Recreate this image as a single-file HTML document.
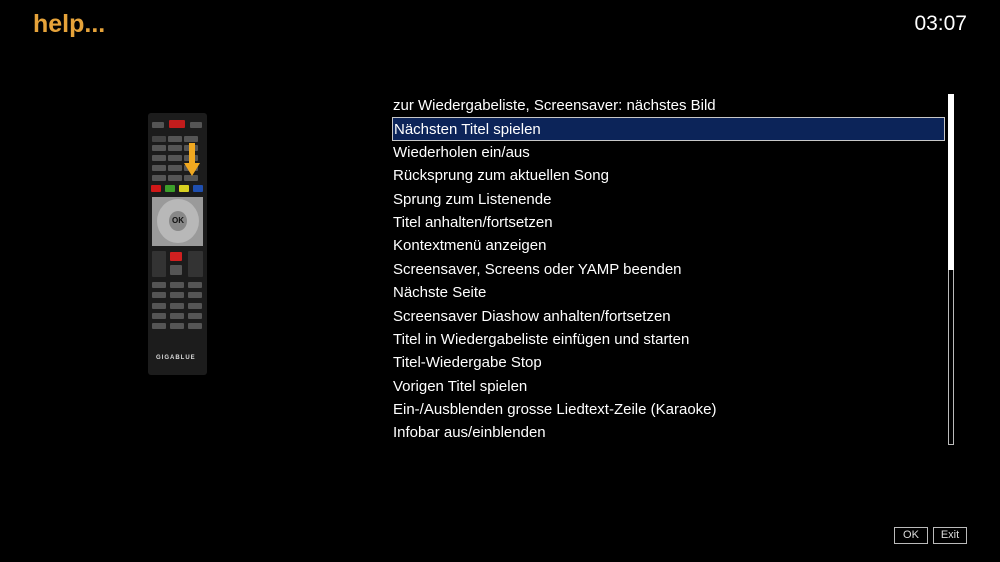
<!DOCTYPE html>
<html><head><meta charset="utf-8"><style>
body{margin:0;width:1000px;height:562px;background:#000;overflow:hidden;font-family:"Liberation Sans",sans-serif;position:relative;color:#fff}
.t{position:absolute;left:33px;top:10px;font-size:25px;font-weight:bold;color:#e6a33a}
.c{position:absolute;right:33px;top:12px;font-size:21px}
.l{position:absolute;left:392px;top:94px;width:553px}
.r{height:23.4px;line-height:23px;font-size:15px;padding-left:1px;box-sizing:border-box;white-space:nowrap}
.s{background:#0c2459;border:1px solid #c8c8c8}
.sb{position:absolute;left:948px;top:94px;width:4px;height:349px;border:1px solid #bbb}
.sf{position:absolute;left:948px;top:94px;width:6px;height:176px;background:#fff}
.b{position:absolute;top:527px;height:15px;border:1px solid #bbb;font-size:11px;line-height:15px;text-align:center;color:#ddd}
.rm{position:absolute;left:148px;top:113px;width:59px;height:262px;background:#1c1c1c;border-radius:3px}
.k{position:absolute;background:#555;height:6px;width:14px;border-radius:1px}
</style></head><body>
<div class="t">help...</div><div class="c">03:07</div>
<div class="rm">
<div class="k" style="left:4px;top:9px;width:12px"></div><div class="k" style="left:21px;top:7px;width:16px;height:8px;background:#c21c1c"></div><div class="k" style="left:42px;top:9px;width:12px"></div>
<div class="k" style="left:4px;top:23px;background:#444"></div><div class="k" style="left:20px;top:23px"></div><div class="k" style="left:36px;top:23px"></div>
<div class="k" style="left:4px;top:32px"></div><div class="k" style="left:20px;top:32px"></div><div class="k" style="left:36px;top:32px"></div>
<div class="k" style="left:4px;top:42px"></div><div class="k" style="left:20px;top:42px"></div><div class="k" style="left:36px;top:42px"></div>
<div class="k" style="left:4px;top:52px"></div><div class="k" style="left:20px;top:52px"></div><div class="k" style="left:36px;top:52px"></div>
<div class="k" style="left:4px;top:62px"></div><div class="k" style="left:20px;top:62px"></div><div class="k" style="left:36px;top:62px"></div>
<div class="k" style="left:3px;top:72px;width:10px;height:7px;background:#d01818"></div><div class="k" style="left:17px;top:72px;width:10px;height:7px;background:#3ca02a"></div><div class="k" style="left:31px;top:72px;width:10px;height:7px;background:#d8d020"></div><div class="k" style="left:45px;top:72px;width:10px;height:7px;background:#1f4fb0"></div>
<div style="position:absolute;left:4px;top:84px;width:51px;height:49px;background:#9a9a9a"></div>
<div style="position:absolute;left:9px;top:86px;width:42px;height:44px;border-radius:50%;background:#b8b8b8"></div>
<div style="position:absolute;left:21px;top:98px;width:18px;height:20px;border-radius:50%;background:#888;font-size:8px;font-weight:bold;color:#111;text-align:center;line-height:20px">OK</div>
<div class="k" style="left:4px;top:138px;width:14px;height:26px;background:#333"></div><div class="k" style="left:22px;top:139px;width:12px;height:9px;background:#d02020"></div><div class="k" style="left:22px;top:152px;width:12px;height:10px"></div><div class="k" style="left:40px;top:138px;width:15px;height:26px;background:#333"></div>
<div class="k" style="left:4px;top:169px"></div><div class="k" style="left:22px;top:169px"></div><div class="k" style="left:40px;top:169px"></div>
<div class="k" style="left:4px;top:179px"></div><div class="k" style="left:22px;top:179px"></div><div class="k" style="left:40px;top:179px"></div>
<div class="k" style="left:4px;top:190px"></div><div class="k" style="left:22px;top:190px"></div><div class="k" style="left:40px;top:190px"></div>
<div class="k" style="left:4px;top:200px"></div><div class="k" style="left:22px;top:200px"></div><div class="k" style="left:40px;top:200px"></div>
<div class="k" style="left:4px;top:210px"></div><div class="k" style="left:22px;top:210px"></div><div class="k" style="left:40px;top:210px"></div>
<div style="position:absolute;left:8px;top:242px;font-size:6px;font-weight:bold;color:#ddd;letter-spacing:1px">GIGABLUE</div>
<svg style="position:absolute;left:36px;top:30px" width="16" height="34"><path d="M5 0h6v20h5l-8 13-8-13h5z" fill="#f0a820"/></svg>
</div>
<div class="l">
<div class="r">zur Wiedergabeliste, Screensaver: nächstes Bild</div>
<div class="r s">Nächsten Titel spielen</div>
<div class="r">Wiederholen ein/aus</div>
<div class="r">Rücksprung zum aktuellen Song</div>
<div class="r">Sprung zum Listenende</div>
<div class="r">Titel anhalten/fortsetzen</div>
<div class="r">Kontextmenü anzeigen</div>
<div class="r">Screensaver, Screens oder YAMP beenden</div>
<div class="r">Nächste Seite</div>
<div class="r">Screensaver Diashow anhalten/fortsetzen</div>
<div class="r">Titel in Wiedergabeliste einfügen und starten</div>
<div class="r">Titel-Wiedergabe Stop</div>
<div class="r">Vorigen Titel spielen</div>
<div class="r">Ein-/Ausblenden grosse Liedtext-Zeile (Karaoke)</div>
<div class="r">Infobar aus/einblenden</div>
</div>
<div class="sb"></div><div class="sf"></div>
<div class="b" style="left:894px;width:32px">OK</div>
<div class="b" style="left:933px;width:32px">Exit</div>
</body></html>
